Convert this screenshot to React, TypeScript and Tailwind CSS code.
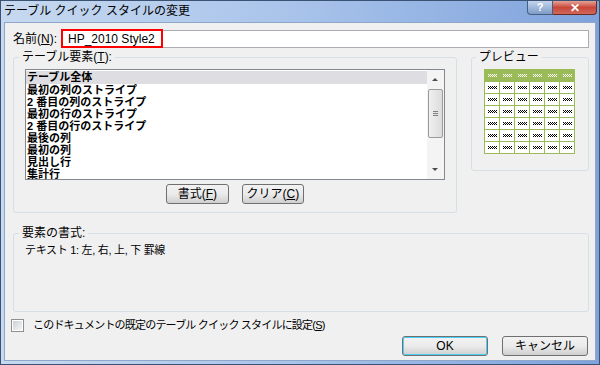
import React from "react";

const items = [
  "テーブル全体",
  "最初の列のストライプ",
  "2 番目の列のストライプ",
  "最初の行のストライプ",
  "2 番目の行のストライプ",
  "最後の列",
  "最初の列",
  "見出し行",
  "集計行",
];

// tiny dithered mark drawn in each preview cell
const Mark = ({ light }: { light?: boolean }) => {
  const c = light ? "#ffffff" : "#000000";
  const px: [number, number][] = [];
  for (let x = 0; x < 9; x++) {
    px.push([x, x % 2 === 0 ? 0 : 1]);
    px.push([x, x % 2 === 0 ? 2 : 1]);
  }
  return (
    <svg width="9" height="3" viewBox="0 0 9 3">
      {px.map(([x, y], i) => (
        <rect key={i} x={x} y={y} width="1" height="1" fill={c} />
      ))}
    </svg>
  );
};

const PreviewTable = () => (
  <div className="grid grid-cols-6 gap-[1px] bg-[#9bbb59] p-[1px]">
    {Array.from({ length: 42 }).map((_, i) => (
      <div
        key={i}
        className={`flex h-[11px] w-[14px] items-center justify-center ${
          i < 6 ? "bg-[#9bbb59]" : "bg-white"
        }`}
      >
        <Mark light={i < 6} />
      </div>
    ))}
  </div>
);

const Button = ({
  children,
  className = "",
}: {
  children: React.ReactNode;
  className?: string;
}) => (
  <button
    className={`flex h-[20px] items-center justify-center rounded-[3px] border border-[#707070] bg-gradient-to-b from-[#f2f2f2] via-[#ebebeb] to-[#cfcfcf] text-[12px] leading-none text-black ${className}`}
  >
    {children}
  </button>
);

export default function App() {
  return (
    <div
      className="flex h-[365px] w-[600px] flex-col overflow-hidden border border-[#3a5374] bg-gradient-to-r from-[#c7d9f0] via-[#a8c3ea] to-[#7fa2dc] text-black"
      style={{ fontFamily: '"Liberation Sans", "Noto Sans CJK JP", sans-serif' }}
    >
      {/* Title bar */}
      <div className="flex h-[21px] shrink-0 items-start justify-between">
        <div className="pl-[3px] pt-[2px] text-[12px] leading-[16px]">
          テーブル クイック スタイルの変更
        </div>
        <div className="mr-[2px] flex">
          <div className="flex h-[14px] w-[26px] items-center justify-center rounded-bl-[4px] border border-t-0 border-[#48607f] bg-gradient-to-b from-[#c3d4ec] to-[#7f9cc8] text-[11px] font-bold leading-none text-white">
            ?
          </div>
          <div className="flex h-[14px] w-[44px] items-center justify-center rounded-br-[4px] border border-l-0 border-t-0 border-[#6b2a24] bg-gradient-to-b from-[#e5a196] via-[#c8473a] to-[#d0675a] text-[12px] font-bold leading-none text-white">
            ✕
          </div>
        </div>
      </div>

      {/* Content */}
      <div className="mx-[3px] mb-[3px] flex flex-1 flex-col border border-[#8ea7c8] bg-[#f0f0f0] pl-[7px] pr-[6px] text-[12px]">
        {/* Name */}
        <div className="mt-[7px] flex items-center">
          <span className="w-[49px] pl-[1px] leading-[14px]">
            名前(<span className="underline">N</span>):
          </span>
          <div className="relative h-[18px] flex-1 border border-[#abadb3] bg-white">
            <div className="absolute -left-[1px] -top-[2px] h-[19px] w-[102px] border-2 border-[#ff0000]" />
            <span className="absolute left-[6px] top-[1px] leading-[14px]">HP_2010 Style2</span>
          </div>
        </div>

        {/* Groups row */}
        <div className="mt-[9px] flex items-start gap-[14px] pl-[1px]">
          {/* Table elements */}
          <div className="relative flex h-[156px] w-[446px] flex-col rounded-[3px] border border-[#d5dfe5] px-[11px] pt-[11px]">
            <span className="absolute -top-[8px] left-[5px] bg-[#f0f0f0] px-[3px] leading-[14px]">
              テーブル要素(<span className="underline">T</span>):
            </span>
            <div className="flex h-[111px] border border-[#828790] bg-white">
              <div className="flex-1 pt-[1px]">
                {items.map((it, i) => (
                  <div
                    key={it}
                    className={`pl-[1px] text-[11px] font-bold ${
                      i === 0 ? "h-[13px] bg-[#dedee2] leading-[13px]" : "h-[12px] leading-[12px]"
                    }`}
                  >
                    {it}
                  </div>
                ))}
              </div>
              <div className="flex w-[17px] flex-col items-center bg-[#f4f4f4] py-[1px]">
                <div className="flex h-[17px] items-center justify-center">
                  <div className="h-0 w-0 border-x-[3px] border-b-[3px] border-x-transparent border-b-[#4d4d4d]" />
                </div>
                <div className="mt-[1px] flex h-[49px] w-[15px] flex-col items-center justify-center gap-[1px] rounded-[2px] border border-[#9b9b9b] bg-gradient-to-r from-[#f0f0f0] to-[#dcdcdc]">
                  <div className="h-[1px] w-[5px] bg-[#808080]" />
                  <div className="h-[1px] w-[5px] bg-[#808080]" />
                  <div className="h-[1px] w-[5px] bg-[#808080]" />
                </div>
                <div className="flex-1" />
                <div className="flex h-[17px] items-center justify-center">
                  <div className="h-0 w-0 border-x-[3px] border-t-[3px] border-x-transparent border-t-[#4d4d4d]" />
                </div>
              </div>
            </div>
            <div className="mt-[4px] flex justify-center gap-[13px]">
              <Button className="w-[63px]">
                書式(<span className="underline">F</span>)
              </Button>
              <Button className="w-[62px]">
                クリア(<span className="underline">C</span>)
              </Button>
            </div>
          </div>

          {/* Preview */}
          <div className="relative flex h-[114px] w-[119px] justify-center rounded-[3px] border border-[#d5dfe5] pt-[11px]">
            <span className="absolute -top-[8px] left-[4px] bg-[#f0f0f0] px-[3px] leading-[14px]">
              プレビュー
            </span>
            <div>
              <PreviewTable />
            </div>
          </div>
        </div>

        {/* Element format */}
        <div className="relative ml-[1px] mt-[20px] h-[79px] rounded-[3px] border border-[#d5dfe5] pl-[11px] pt-[9px]">
          <span className="absolute -top-[8px] left-[5px] bg-[#f0f0f0] px-[3px] leading-[14px]">
            要素の書式:
          </span>
          <div className="text-[11px] leading-[14px] tracking-[-0.3px]">テキスト 1: 左, 右, 上, 下 罫線</div>
        </div>

        {/* Checkbox */}
        <div className="mt-[6px] flex items-center gap-[9px]">
          <div className="-ml-[1px] flex h-[13px] w-[13px] items-center justify-center border border-[#8e8f8f] bg-white">
            <div className="h-[9px] w-[9px] bg-gradient-to-br from-[#cbcfd5] to-[#f6f6f6]" />
          </div>
          <span className="text-[11px] leading-[14px] tracking-[-0.8px]">
            このドキュメントの既定のテーブル クイック スタイルに設定(<span className="underline">S</span>)
          </span>
        </div>

        {/* Buttons */}
        <div className="mt-[4px] flex justify-end gap-[14px] pr-[1px]">
          <Button className="w-[86px] border-[#3c7fb1] shadow-[inset_0_0_0_1px_#48d0f8]">OK</Button>
          <Button className="w-[86px]">キャンセル</Button>
        </div>
      </div>
    </div>
  );
}
